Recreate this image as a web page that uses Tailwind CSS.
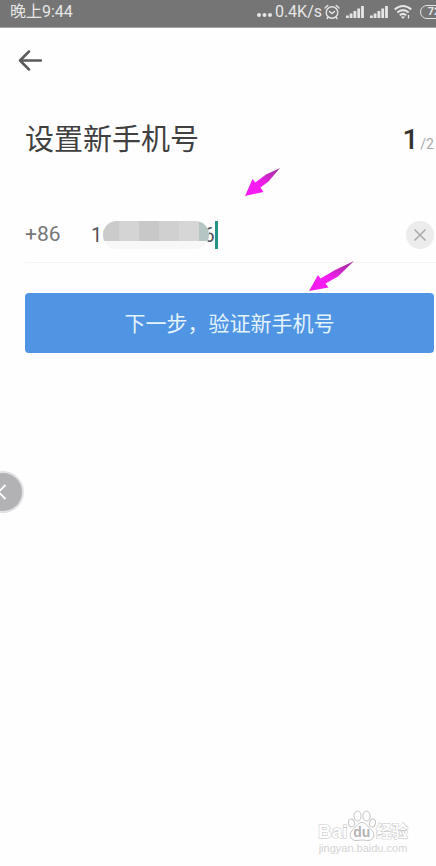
<!DOCTYPE html>
<html lang="zh-CN">
<head>
<meta charset="utf-8">
<meta name="viewport" content="width=device-width, initial-scale=1">
<title>设置新手机号</title>
<script src="https://cdn.jsdelivr.net/npm/@tailwindcss/browser@4"></script>
</head>
<body class="relative min-h-screen overflow-x-hidden bg-[#fefefe] font-[Roboto,'Noto_Sans_CJK_SC',sans-serif] text-[#444]">
<header class="flex h-7 items-center justify-between overflow-hidden border-b border-[#a5a5a5] bg-[#757575] pl-2.5 text-[#e6e6e6]">
  <span class="pb-1 text-base leading-6">晚上9:44</span>
  <div class="-mr-3 flex shrink-0 items-center pb-1">
    <svg class="mr-0.5 h-4 w-4" viewBox="0 0 16 16" fill="currentColor" aria-hidden="true"><circle cx="2" cy="11" r="2"/><circle cx="7.500" cy="11" r="2"/><circle cx="13" cy="11" r="2"/></svg>
    <span class="text-base leading-6">0.4K/s</span>
    <svg class="ml-0.5 h-4 w-4" viewBox="0 0 16 16" fill="none" stroke="currentColor" stroke-width="1.4" stroke-linecap="round" aria-hidden="true"><circle cx="8" cy="8.500" r="5.800"/><path d="M1 4 3.800 1.500M15 4 12.200 1.500M5.500 7.500 8 9.500 10.500 7.500M4 13.200 3 14.500M12 13.200 13 14.500"/></svg>
    <svg class="ml-1.5 h-4 w-[18px]" viewBox="0 0 18 16" fill="currentColor" aria-hidden="true"><path d="M0 11.500h2.800V14H0zM3.700 9.500h2.800V14H3.700zM7.500 7h2.800v7H7.500zM11.300 4.500h2.800V14h-2.800zM15.100 2h2.800v12h-2.800z"/></svg>
    <svg class="ml-1.5 h-4 w-[18px]" viewBox="0 0 18 16" fill="currentColor" aria-hidden="true"><path d="M0 11.500h2.800V14H0zM3.700 9.500h2.800V14H3.700zM7.500 7h2.800v7H7.500zM11.300 4.500h2.800V14h-2.800zM15.100 2h2.800v12h-2.800z"/></svg>
    <svg class="ml-1.5 h-4 w-[18px]" viewBox="0 0 18 16" fill="none" stroke="currentColor" stroke-width="2" aria-hidden="true"><path d="M.7 5.500Q9-1.500 17.300 5.500M3.300 8.500Q9 3.700 14.700 8.500M5.800 11.200Q9 8.500 12.200 11.200"/><path d="M6.800 12.500h4.400L9 15z" fill="currentColor" stroke="none"/><path d="M14.500 11v3.500" stroke-width="1.300"/></svg>
    <span class="ml-2 flex h-3.5 w-7 items-center justify-center rounded-full border border-[#e6e6e6] text-[11px] leading-3 font-bold">72</span>
  </div>
</header>

<main>
  <button type="button" aria-label="返回" class="mt-5 ml-[18px] flex h-6 w-6 items-center justify-center text-[#5b5b5b]">
    <svg class="h-6 w-6" viewBox="0 0 24 24" fill="none" stroke="currentColor" stroke-width="2.500" stroke-linecap="round" stroke-linejoin="round" aria-hidden="true"><path d="M23 12.500H2.500M11 3.500 2 12.500l9 9"/></svg>
  </button>

  <div class="mt-[50px] flex items-center justify-between pr-0.5 pl-[25px]">
    <h1 class="text-[29px] leading-9 font-normal text-[#404040]">设置新手机号</h1>
    <p class="flex items-baseline gap-0.5 leading-9"><span class="text-[28px] font-medium text-[#333]">1</span><span class="text-sm text-[#aaa]">/2</span></p>
  </div>

  <form>
    <div class="mt-[49px] ml-[25px] flex h-[56px] items-center border-b border-[#f4f4f4] pr-0.5">
      <label for="phone" class="w-[66px] text-[21px] text-[#777]">+86</label>
      <div class="relative min-w-0 flex-1">
        <input id="phone" type="tel" value="1&#8199;&#8199;&#8199;&#8199;&#8199;&#8199;&#8199;&#8199;&#8199;6" class="h-8 w-full bg-transparent text-xl text-[#555] outline-none">
        <div class="absolute top-0.5 left-3 h-7 w-[106px] overflow-hidden rounded-full bg-[#f7f7f7]">
          <div class="flex h-5">
            <span class="w-4 bg-[#cbcbcb]"></span><span class="w-5 bg-[#d4d4d4]"></span><span class="w-5 bg-[#c8c8c8]"></span><span class="w-5 bg-[#d0d0d0]"></span><span class="w-5 bg-[#d6d6d6]"></span><span class="flex-1 bg-[#b5c5c3]"></span>
          </div>
        </div>
        <span class="absolute top-0.5 left-[124px] h-7 w-[3px] bg-[#239486]"></span>
      </div>
      <button type="button" aria-label="清除" class="flex h-7 w-7 items-center justify-center rounded-full bg-[#ececec] text-[#aaa]">
        <svg class="h-3.5 w-3.5" viewBox="0 0 14 14" fill="none" stroke="currentColor" stroke-width="1.500" aria-hidden="true"><path d="M1.500 1.500 12.500 12.500M12.500 1.500 1.500 12.500"/></svg>
      </button>
    </div>
    <div class="mt-[30px] pr-0.5 pl-[25px]">
      <button type="button" class="h-[60px] w-full rounded-sm bg-[#5094e4] pt-1 text-[21px] text-[#e4f3fc]">下一步，验证新手机号</button>
    </div>
  </form>
</main>

<svg class="absolute top-[167px] left-[244px] h-[30px] w-9" viewBox="0 0 36 30" aria-hidden="true"><defs><linearGradient id="pink" x1="0" y1="1" x2="1" y2="0"><stop offset=".45" stop-color="#f41cf0"/><stop offset="1" stop-color="#94358f"/></linearGradient></defs><path fill="url(#pink)" d="M1 29 8.500 12 11.300 15.500 22 7.500 36 1 24.500 14.500 16.500 20.500 19.500 25z"/></svg>
<svg class="absolute top-[261px] left-[308px] h-[31px] w-[46px]" viewBox="0 0 46 31" aria-hidden="true"><path fill="url(#pink)" d="M1 30 10 14 12.500 17.500 27 9 46 0 30 15.500 17.500 22.500 20.500 26.500z"/></svg>

<button type="button" aria-label="展开" class="absolute top-[471px] -left-[18px] flex h-[42px] w-[42px] items-center justify-center rounded-full border-2 border-[#e2e2e4] bg-[#b2b2b5] text-white">
  <svg class="mr-1 h-4 w-3" viewBox="0 0 12 16" fill="none" stroke="currentColor" stroke-width="1.800" aria-hidden="true"><path d="M10.500 1 3.500 8l7 7"/></svg>
</button>

<div class="absolute right-7 bottom-3 w-[90px] text-white">
  <div class="flex h-8 items-end justify-between leading-5">
    <span class="font-['Liberation_Sans',sans-serif] text-[19px] font-bold [-webkit-text-stroke:1px_#c4c4c4] [paint-order:stroke_fill]">Bai</span>
    <span class="relative block h-8 w-7 shrink-0">
      <svg class="h-8 w-7" viewBox="0 0 28 32" fill="#fff" stroke="#c4c4c4" aria-hidden="true"><ellipse cx="3.500" cy="13" rx="3" ry="4" transform="rotate(-15 3.500 13)"/><ellipse cx="9.500" cy="6" rx="3.600" ry="5"/><ellipse cx="18.500" cy="6" rx="3.600" ry="5"/><ellipse cx="24.500" cy="13" rx="3" ry="4" transform="rotate(15 24.500 13)"/><path d="M14 12.500c-4 0-5.500 4-8.500 6.500C0 23 2 30.500 8 30.500c2.500 0 4-.5 6-.5s3.500.5 6 .5c6 0 8-7.500 2.500-11.500C19.500 16.500 18 12.500 14 12.500z"/></svg>
      <span class="absolute inset-x-0 bottom-0 text-center font-['Liberation_Sans',sans-serif] text-sm leading-5 font-bold text-[#b5b5b5]">du</span>
    </span>
    <span class="text-base leading-5 font-bold [-webkit-text-stroke:1px_#c4c4c4] [paint-order:stroke_fill]">经验</span>
  </div>
  <p class="text-center font-['Liberation_Sans',sans-serif] text-[11px] leading-3 whitespace-nowrap text-[#d4d4d4]">jingyan.baidu.com</p>
</div>
</body>
</html>
